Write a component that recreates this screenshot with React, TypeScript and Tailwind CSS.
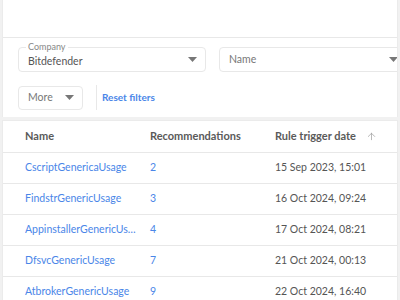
import { ArrowUp } from "lucide-react";

const rows = [
  { name: "CscriptGenericaUsage", recs: 2, date: "15 Sep 2023, 15:01" },
  { name: "FindstrGenericUsage", recs: 3, date: "16 Oct 2024, 09:24" },
  { name: "AppinstallerGenericUsage", recs: 4, date: "17 Oct 2024, 08:21" },
  { name: "DfsvcGenericUsage", recs: 7, date: "21 Oct 2024, 00:13" },
  { name: "AtbrokerGenericUsage", recs: 9, date: "22 Oct 2024, 16:40" },
];

function Caret() {
  return (
    <svg width="9" height="5" viewBox="0 0 9 5" className="shrink-0">
      <path d="M0 0h9L4.5 5z" fill="#777" />
    </svg>
  );
}

export default function App() {
  return (
    <div
      className="w-[400px] h-[300px] overflow-hidden bg-[#f1f1f1] pl-[2px] pr-[2px] text-[#333]"
      style={{ fontFamily: "Lato, 'Liberation Sans', sans-serif" }}
    >
      {/* top panel + filters */}
      <div className="bg-white border-x border-[#ebebeb] overflow-hidden">
        <div className="h-[38px] border-b border-[#e8e8e8]" />
        <div className="h-[79px] pl-[15px] pt-[9px]">
          <div className="flex gap-[13px] w-[600px]">
            <div className="relative w-[188px] h-[25px] rounded-[4px] border border-[#e8e8e8] flex items-center justify-between pl-[9px] pr-[8px]">
              <span className="absolute -top-[7px] left-[7px] bg-white px-[2px] text-[9px] leading-[12px] text-[#888]">
                Company
              </span>
              <span className="text-[10.5px] text-[#555] mt-[4px]">Bitdefender</span>
              <Caret />
            </div>
            <div className="w-[188px] h-[25px] rounded-[4px] border border-[#e8e8e8] flex items-center justify-between pl-[9px] pr-[8px]">
              <span className="text-[10.5px] text-[#777]">Name</span>
              <Caret />
            </div>
          </div>
          <div className="flex items-center mt-[13px]">
            <div className="w-[65px] h-[24px] rounded-[4px] border border-[#e8e8e8] flex items-center justify-between pl-[9px] pr-[8px]">
              <span className="text-[10.5px] text-[#777]">More</span>
              <Caret />
            </div>
            <div className="w-px h-[25px] bg-[#e8e8e8] ml-[13px] mr-[5px]" />
            <span className="text-[10px] font-bold text-[#4a86e8]">Reset filters</span>
          </div>
        </div>
      </div>

      {/* table */}
      <div className="mt-[3px] bg-white border border-[#ebebeb]">
        <div className="h-[32px] flex items-center border-b border-[#e8e8e8] pl-[22px] text-[11px] font-bold text-[#5a5a5a]">
          <div className="w-[125px]">Name</div>
          <div className="w-[125px]">Recommendations</div>
          <div className="flex items-center">
            <span>Rule trigger date</span>
            <ArrowUp size={11} strokeWidth={1.5} className="ml-[10px] text-[#999]" />
          </div>
        </div>
        {rows.map((r) => (
          <div
            key={r.name}
            className="h-[31px] flex items-center border-b border-[#e8e8e8] pl-[22px] text-[10.5px]"
          >
            <div className="w-[125px] pr-[10px]">
              <div className="truncate text-[#4a86e8]">{r.name}</div>
            </div>
            <div className="w-[125px] text-[#4a86e8]">{r.recs}</div>
            <div className="text-[#555]">{r.date}</div>
          </div>
        ))}
      </div>
    </div>
  );
}
